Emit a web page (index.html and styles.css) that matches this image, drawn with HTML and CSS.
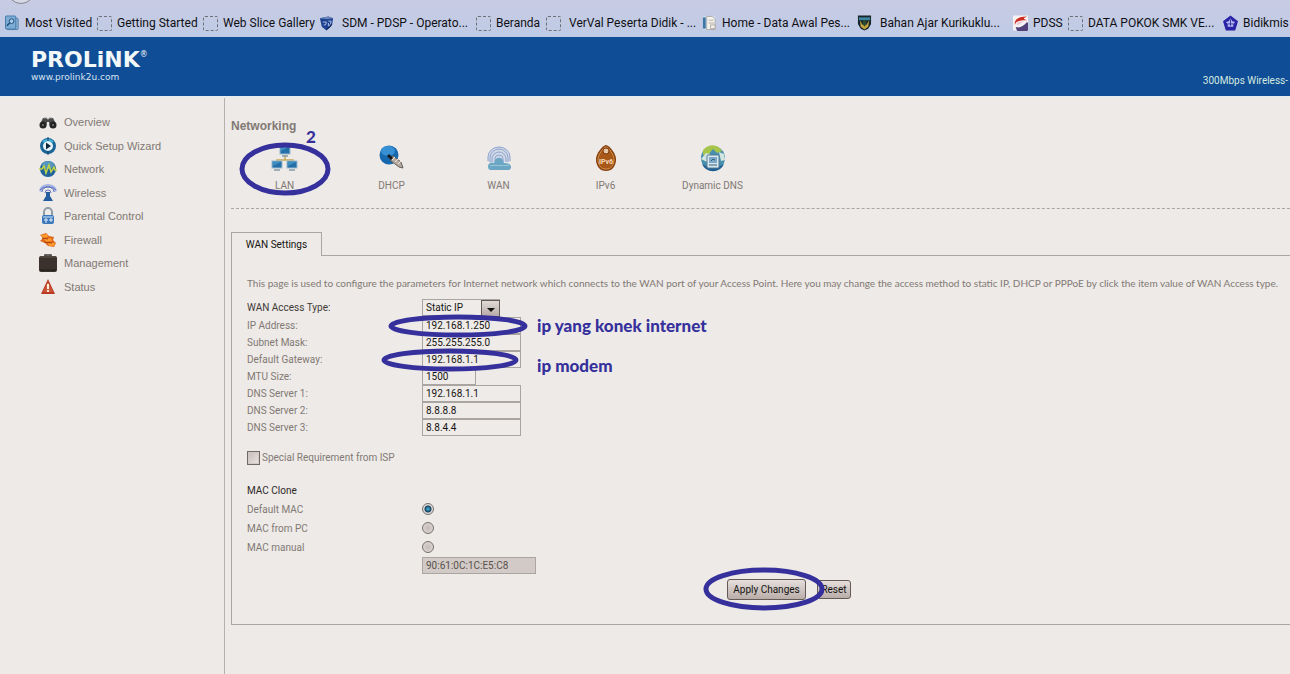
FILE: index.html
```html
<!DOCTYPE html>
<html lang="en">
<head>
  <meta charset="UTF-8">
  <meta name="viewport" content="width=device-width, initial-scale=1.0">
  <title>PROLiNK - WAN Settings</title>
  <link rel="stylesheet" href="styles.css">
</head>
<body>
  <!-- Bookmarks -->
  <nav class="bookmarks">
    <span class="back-edge"></span>
    <a href="#"><svg class="bm-icon" viewBox="0 0 16 16"><rect x="2" y="3" width="12" height="12" rx="1" fill="#8fb5d6" stroke="#4f7fae"/><rect x=".5" y=".5" width="11" height="14" rx="1" fill="#7cabd3" stroke="#4377a8"/><circle cx="7" cy="6" r="2.5" fill="#a9cbe6" stroke="#1d4a7c"/><path d="M5 8l-3 3" stroke="#1d4a7c" stroke-width="1.5"/></svg>Most Visited</a>
    <a href="#"><span class="bm-blank"></span>Getting Started</a>
    <a href="#"><span class="bm-blank"></span>Web Slice Gallery</a>
    <a href="#" class="wide"><svg class="bm-icon" viewBox="0 0 16 16"><path d="M1 3l9-2 5 2-1 7-6 6-5-4z" fill="#1c3f8f"/><path d="M1 3l8 1 6-1-5-2z" fill="#6c86b8"/><path d="M4 7h4l-1 3H5M10 6h3l-1 4-2 1V8" fill="none" stroke="#b4c6e8"/><path d="M8 15l4-3 1-3" stroke="#0a1848" fill="none"/></svg>SDM - PDSP - Operato...</a>
    <a href="#"><span class="bm-blank"></span>Beranda</a>
    <a href="#" class="wide"><span class="bm-blank"></span>VerVal Peserta Didik - ...</a>
    <a href="#"><svg class="bm-icon" viewBox="0 0 16 16"><path d="M1 1h13v14H1z" fill="#dce4ed"/><path d="M1 2h3v12H1z" fill="#3d78a8"/><path d="M5 1h6l3 3v11H5z" fill="#f5f3ee" stroke="#aaa"/><path d="M7 5h5M7 8h6M9 10h5v4H9z" fill="#eee" stroke="#b1a99f"/></svg>Home - Data Awal Pes...</a>
    <a href="#" class="wide"><svg class="bm-icon" viewBox="0 0 16 16"><path d="M1 0h14v9l-3 5-4 2-4-2-3-5z" fill="#17252d"/><path d="M2 2h12v3H2z" fill="#3d86a0"/><path d="M3 5l3 5 2-3 2 3 3-5-1 7-4 3-4-3z" fill="#c4a53e"/><path d="M6 5h4v4l-2 3-2-3z" fill="#2b4a35"/></svg>Bahan Ajar Kurikuklu...</a>
    <a href="#"><svg class="bm-icon" viewBox="0 0 16 16"><rect width="16" height="16" fill="#f6f1f3"/><path d="M15 7a7 7 0 1 1-12 5c3 2 8 0 12-5z" fill="#514079"/><path d="M15 1C6 1 1 4 2 10c1-4 5-5 13-5-4-1-5-2 0-4z" fill="#d02b22"/><path d="M4 10c2 1 5-3 8-4-5 0-8 1-8 4z" fill="#e5cad6"/></svg>PDSS</a>
    <a href="#"><span class="bm-blank"></span>DATA POKOK SMK VE...</a>
    <a href="#"><svg class="bm-icon" viewBox="0 0 16 16"><path d="M8 0l8 6-3 10H3L0 6z" fill="#2922a7"/><path d="M8 3l2 3 3 1-2 2v3H5V9L3 7l3-1z" fill="#b5b8ed"/><path d="M8 4v7M5 9h6" stroke="#3832ad"/></svg>Bidikmis</a>
  </nav>

  <!-- Header -->
  <header class="header">
    <div class="brand">
      <div class="logo">PROLiNK<span class="reg">®</span></div>
      <div class="site">www.prolink2u.com</div>
    </div>
    <div class="model">300Mbps Wireless-</div>
  </header>

  <div class="layout">
    <!-- Sidebar -->
    <aside class="sidenav">
      <ul>
        <li><a href="#"><svg class="side-icon" viewBox="0 0 18 18"><path d="M1 11L4 5h4l1 2 1-2h4l3 6v3h-6l-1-5H8l-1 5H1z" fill="#4a4a4a"/><circle cx="4" cy="12" r="3.5" fill="#252525"/><circle cx="14" cy="12" r="3.5" fill="#252525"/><circle cx="4" cy="12" r="1" fill="#777"/><circle cx="14" cy="12" r="1" fill="#777"/><path d="M5 5h3M10 5h3" stroke="#999"/></svg>Overview</a></li>
        <li><a href="#"><svg class="side-icon" viewBox="0 0 18 18"><circle cx="9" cy="9" r="6.5" fill="#e8f3f8" stroke="#1a6596" stroke-width="3"/><path d="M4 5a7 7 0 0 1 10 0" fill="none" stroke="#43b4d9" stroke-width="2"/><path d="M7 5.5l5 3.5-5 3.5z" fill="#10283d"/><path d="M9 0v4M9 14v4" stroke="#123c66"/></svg>Quick Setup Wizard</a></li>
        <li><a href="#"><svg class="side-icon" viewBox="0 0 18 18"><circle cx="9" cy="9" r="8" fill="#20649b"/><ellipse cx="9" cy="5" rx="6" ry="4" fill="#5595be"/><path d="M0 9h3l2-3 2 7 3-8 2 7 3-5 1 3h2" fill="none" stroke="#c1d546" stroke-width="1.5"/></svg>Network</a></li>
        <li><a href="#"><svg class="side-icon" viewBox="0 0 18 18"><path d="M0 7a9 7 0 0 1 18 0l-3 1a6 5 0 0 0-12 0z" fill="#a9b8e7"/><path d="M1 6a9 6 0 0 1 16 0M3 8a6 5 0 0 1 12 0M6 9a3 3 0 0 1 6 0" fill="none" stroke="#6072bd"/><path d="M7 8h4v4l3 5H4l3-5z" fill="#245d9f"/></svg>Wireless</a></li>
        <li><a href="#"><svg class="side-icon" viewBox="0 0 18 18"><path d="M5 9V5a4 4 0 0 1 8 0v4" fill="none" stroke="#8f9da8" stroke-width="2"/><rect x="3" y="8" width="12" height="9" rx="2" fill="#3c78b9"/><path d="M4 9h10v2H4z" fill="#86b0dc"/><path d="M5 13h4M7 11v5M10 13h4M12 11v4" stroke="#dfedff"/></svg>Parental Control</a></li>
        <li><a href="#"><svg class="side-icon" viewBox="0 0 18 18"><path d="M1 4l6-2 3 3 5 1-1 3 3 3-2 4-6-1-3-3-5-2 3-3z" fill="#df681a"/><path d="M2 4l6-1 1 3-5 1zM5 8l7-1 1 3-6 1zM9 12l7 0-1 3-5 0z" fill="#ff9b2d"/><path d="M3 7l6 1M5 11l8 1" stroke="#a63c12"/></svg>Firewall</a></li>
        <li><a href="#"><svg class="side-icon" viewBox="0 0 18 18"><path d="M6 4V1h6v3" fill="none" stroke="#3b332f" stroke-width="1.5"/><rect y="2" width="18" height="16" rx="2" fill="#3b322d"/><path d="M2 3h14" stroke="#66584f"/><path d="M1 16h16" stroke="#211c19"/></svg>Management</a></li>
        <li><a href="#"><svg class="side-icon" viewBox="0 0 18 18"><path d="M9 1l7 15H2z" fill="#b83b21"/><path d="M9 3L4 14h10z" fill="#cc563a"/><path d="M9 6v5M9 12v2" stroke="#fff0df" stroke-width="2"/></svg>Status</a></li>
      </ul>
    </aside>

    <!-- Main Content -->
    <main class="content">
      <h1>Networking</h1>
      <div class="net-menu">
        <a href="#"><svg class="net-icon" viewBox="0 0 28 28"><path d="M14 11v5M6 20v-4h16v4" fill="none" stroke="#c5a855" stroke-width="1.5"/><rect x="9" y="2" width="10" height="8" fill="#256fa8" stroke="#9abbd2"/><rect x="1" y="17" width="10" height="7" fill="#256fa8" stroke="#9abbd2"/><rect x="16" y="17" width="10" height="7" fill="#256fa8" stroke="#9abbd2"/><path d="M10 3h8l-8 4zM2 18h8l-8 4zM17 18h8l-8 4z" fill="#3d8fc2"/><path d="M11 12h6M3 26h6M18 26h6" stroke="#8b9ca8" stroke-width="1.5"/></svg>LAN
          <svg class="mark mark-lan" viewBox="0 0 92 54"><ellipse cx="46" cy="27" rx="43" ry="24"/></svg>
          <span class="note note-step">2</span>
        </a>
        <a href="#"><svg class="net-icon" viewBox="0 0 28 28"><circle cx="11" cy="11" r="9.5" fill="#1768ae"/><ellipse cx="10" cy="7" rx="7" ry="5" fill="#3790d4"/><path d="M12 13l3-1 8 6 2 6-4-1-8-6z" fill="#b6aaa0" stroke="#665f59"/><path d="M14 16l3-3M17 18l3-3M20 20l3-3" stroke="#f0e9df"/><path d="M10 11l4 4" stroke="#151a20" stroke-width="3"/></svg>DHCP</a>
        <a href="#"><svg class="net-icon" viewBox="0 0 28 28"><path d="M3 18V13a11 10 0 0 1 22 0v5" fill="#d1d9e9"/><g fill="none" stroke="#8fa4cd"><path d="M3 17V13a11 10 0 0 1 22 0v4M5 18v-4a9 9 0 0 1 18 0v4M7 18v-3a7 7 0 0 1 14 0v3M10 17v-2a4 4 0 0 1 8 0v2"/></g><path d="M5 26a4 4 0 0 1 0-7c2-1 3 0 4 0 1-7 9-7 10 0 8-1 9 7 4 7z" fill="#6ba6c5"/><path d="M5 22c5-2 12 1 19-1" fill="none" stroke="#9bcbd7"/></svg>WAN</a>
        <a href="#"><svg class="net-icon" viewBox="0 0 28 28"><path d="M14 1c3 0 11 9 10 16-1 6-4 10-10 10S5 23 4 17C3 10 11 1 14 1z" fill="#8a420f"/><path d="M14 3c2 0 9 8 8 14-1 5-3 8-8 8s-7-3-8-8c-1-6 6-14 8-14z" fill="#a85816" stroke="#d49450"/><circle cx="14" cy="7" r="3" fill="#e7c6a4" stroke="#79370d"/><text x="14" y="20" text-anchor="middle" class="badge-text">IPv6</text></svg>IPv6</a>
        <a href="#"><svg class="net-icon" viewBox="0 0 28 28"><circle cx="14" cy="14" r="12" fill="#478fae"/><path d="M4 6c6-7 15-6 19 1l-5 2-4-4-4 5-6 1z" fill="#a6c54a"/><path d="M2 15l5-6 4 1-3 8zM20 8l5 2 1 6-4 1z" fill="#d2e6df"/><path d="M3 20a12 12 0 0 0 22 0l-4 2H7z" fill="#215e91"/><rect x="8" y="11" width="12" height="13" rx="1" fill="#d9e7ee" stroke="#547c96"/><path d="M10 13h8v6h-8z" fill="#7ba8c6"/><path d="M12 17l2-2 2 1M10 21h8" stroke="#345d79" fill="none"/></svg>Dynamic DNS</a>
      </div>

      <div class="tabs">
        <button type="button" class="tab">WAN Settings</button>
      </div>

      <form class="panel">
        <p class="intro">This page is used to configure the parameters for Internet network which connects to the WAN port of your Access Point. Here you may change the access method to static IP, DHCP or PPPoE by click the item value of WAN Access type.</p>

        <div class="row row-type">
          <label for="wanType" class="dark">WAN Access Type:</label>
          <span class="select-box">
            <select id="wanType">
              <option>Static IP</option>
              <option>DHCP Client</option>
              <option>PPPoE</option>
            </select>
          </span>
        </div>
        <div class="row">
          <label for="ip">IP Address:</label>
          <input type="text" id="ip" value="192.168.1.250">
          <svg class="mark mark-ip" viewBox="0 0 140 24"><ellipse cx="70" cy="12" rx="67" ry="9"/></svg>
          <span class="note">ip yang konek internet</span>
        </div>
        <div class="row">
          <label for="mask">Subnet Mask:</label>
          <input type="text" id="mask" value="255.255.255.0">
        </div>
        <div class="row">
          <label for="gateway">Default Gateway:</label>
          <input type="text" id="gateway" value="192.168.1.1">
          <svg class="mark mark-gateway" viewBox="0 0 140 24"><ellipse cx="70" cy="12" rx="66" ry="9"/></svg>
          <span class="note note-modem">ip modem</span>
        </div>
        <div class="row">
          <label for="mtu">MTU Size:</label>
          <input type="text" id="mtu" class="short" value="1500">
        </div>
        <div class="row">
          <label for="dns1">DNS Server 1:</label>
          <input type="text" id="dns1" value="192.168.1.1">
        </div>
        <div class="row">
          <label for="dns2">DNS Server 2:</label>
          <input type="text" id="dns2" value="8.8.8.8">
        </div>
        <div class="row">
          <label for="dns3">DNS Server 3:</label>
          <input type="text" id="dns3" value="8.8.4.4">
        </div>

        <div class="check-row">
          <input type="checkbox" id="special">
          <label for="special">Special Requirement from ISP</label>
        </div>

        <h2>MAC Clone</h2>
        <div class="row row-mac">
          <label for="macDefault">Default MAC</label>
          <input type="radio" name="mac" id="macDefault" checked>
        </div>
        <div class="row row-mac">
          <label for="macPc">MAC from PC</label>
          <input type="radio" name="mac" id="macPc">
        </div>
        <div class="row row-mac">
          <label for="macManual">MAC manual</label>
          <input type="radio" name="mac" id="macManual">
        </div>
        <div class="row">
          <span></span>
          <input type="text" class="mac-value" aria-label="MAC address" value="90:61:0C:1C:E5:C8" disabled>
        </div>

        <div class="actions">
          <button type="button" class="btn">Apply Changes</button>
          <button type="reset" class="btn btn-reset">Reset</button>
          <svg class="mark mark-apply" viewBox="0 0 122 44"><ellipse cx="61" cy="22" rx="58" ry="19"/></svg>
        </div>
      </form>
    </main>
  </div>
</body>
</html>
```
FILE: styles.css
```css
/* Global Styles */
* {
  box-sizing: border-box;
}

body {
  margin: 0;
  min-height: 100vh;
  display: flex;
  flex-direction: column;
  overflow: hidden;
  background-color: #edeae7;
  color: #827974;
  font-family: Roboto, Arial, sans-serif;
  font-size: 10px;
  line-height: 14px;
}

a {
  color: inherit;
  text-decoration: none;
}

/* Bookmarks */
.bookmarks {
  position: relative;
  display: grid;
  grid-template-columns: 92px 106px 116px 157px 70px 156px 155px 156px 55px 155px 67px;
  height: 37px;
  padding: 9px 0 0 5px;
  overflow: hidden;
  background: linear-gradient(#c8cbe4, #bfcbe5);
  color: #101014;
  font-size: 12px;
}

.bookmarks a {
  display: flex;
  align-items: center;
  gap: 5px;
  white-space: nowrap;
}

.bookmarks a.wide {
  gap: 8px;
}

.bm-icon {
  flex: none;
  width: 15px;
  height: 16px;
}

.bm-blank {
  flex: none;
  width: 15px;
  height: 15px;
  border: 1px dashed #6e7078;
  border-radius: 2px;
}

.back-edge {
  position: absolute;
  top: -24px;
  left: 7px;
  width: 28px;
  height: 28px;
  border: 1px solid #85868e;
  border-radius: 50%;
  background-color: #d7d8e6;
}

/* Header */
.header {
  display: flex;
  justify-content: space-between;
  height: 61px;
  padding: 12px 0 0 31px;
  background-color: #0f4d97;
  border-bottom: 2px solid #e5edec;
  color: #f2f7f7;
}

.logo {
  display: flex;
  font-family: "DejaVu Sans", sans-serif;
  font-size: 22px;
  font-weight: bold;
  line-height: 22px;
}

.reg {
  font-size: 8px;
  font-weight: normal;
  line-height: 12px;
}

.site {
  font-family: "DejaVu Sans", sans-serif;
  font-size: 9px;
  line-height: 12px;
  color: #d5e3ef;
}

.model {
  padding: 25px 2px 0 0;
  white-space: nowrap;
  color: #d5eadf;
}

/* Sidebar */
.layout {
  flex: 1;
  display: flex;
}

.sidenav {
  flex: none;
  width: 225px;
  border-right: 1px solid #b5b1ae;
}

.sidenav ul {
  display: grid;
  grid-auto-rows: 1fr;
  height: 188px;
  margin: 15px 0 0 39px;
  padding: 0;
  list-style: none;
  font-family: "Liberation Sans", Arial, sans-serif;
  font-size: 11px;
}

.sidenav a {
  display: flex;
  align-items: center;
  gap: 7px;
}

.side-icon {
  width: 18px;
  height: 18px;
}

/* Main Content */
.content {
  flex: 1;
  min-width: 0;
  padding: 21px 0 24px 6px;
}

h1 {
  margin: 0;
  font-family: "Liberation Sans", Arial, sans-serif;
  font-size: 12px;
  line-height: 14px;
}

.net-menu {
  display: grid;
  grid-template-columns: repeat(5, 107px);
  padding: 11px 0 15px;
  border-bottom: 1px dashed #aaa5a1;
}

.net-menu a {
  position: relative;
  display: flex;
  flex-direction: column;
  align-items: center;
  gap: 7px;
}

.net-icon {
  width: 28px;
  height: 28px;
}

.badge-text {
  font-size: 7px;
  font-weight: bold;
  fill: #f7d9bd;
}

/* Tabs */
.tabs {
  display: flex;
  margin-top: 23px;
}

.tabs::after {
  content: "";
  flex: 1;
  border-bottom: 1px solid #aaa6a3;
}

.tab {
  width: 91px;
  height: 24px;
  padding: 0;
  border: 1px solid #aaa6a3;
  border-bottom: none;
  background: none;
  color: #161412;
  font-family: inherit;
  font-size: 10px;
}

.panel {
  padding: 20px 0 24px 15px;
  border-left: 1px solid #aaa6a3;
  border-bottom: 1px solid #aaa6a3;
}

.intro {
  margin: 0 0 9px;
  font-family: Lato, sans-serif;
  white-space: nowrap;
}

/* Form rows */
.row {
  position: relative;
  display: grid;
  grid-template-columns: 175px auto 1fr;
  align-items: center;
  height: 17px;
}

.row-type {
  margin-bottom: 1px;
}

.row-mac {
  height: 19px;
}

.dark {
  color: #3f3a37;
}

input[type="text"],
select {
  width: 99px;
  height: 17px;
  margin: 0;
  padding: 0 3px;
  border: 1px solid #aaa5a1;
  border-radius: 0;
  background-color: #eeebe8;
  color: #171513;
  font-family: inherit;
  font-size: 10px;
}

input.short {
  width: 54px;
}

input.mac-value {
  width: 114px;
  background-color: #d2cac6;
  color: #59524e;
}

.select-box {
  position: relative;
  width: 78px;
  height: 17px;
}

.select-box select {
  width: 78px;
  appearance: none;
}

.select-box::before {
  content: "";
  position: absolute;
  top: 1px;
  right: 0;
  width: 17px;
  height: 15px;
  border: 1px solid #625955;
  background: linear-gradient(#e0dad7, #b7aaa6);
  pointer-events: none;
}

.select-box::after {
  content: "";
  position: absolute;
  top: 9px;
  right: 5px;
  border: 4px solid transparent;
  border-top-color: #111;
  border-bottom: none;
  pointer-events: none;
}

.check-row {
  display: flex;
  align-items: center;
  gap: 2px;
  height: 17px;
  margin: 13px 0 16px;
}

input[type="checkbox"] {
  appearance: none;
  width: 13px;
  height: 14px;
  margin: 0;
  border: 1px solid #716966;
  background: linear-gradient(135deg, #c4bbb7, #ebe6e3);
  box-shadow: inset 0 0 0 1px #d1c9c5;
}

input[type="radio"] {
  appearance: none;
  width: 12px;
  height: 12px;
  margin: 0 0 2px;
  border: 1px solid #77706d;
  border-radius: 50%;
  background: radial-gradient(#c4bbb7, #e2dcd9);
}

input[type="radio"]:checked {
  background: radial-gradient(#3b9ac0 0 1px, #143c5c 3px, #dedad8 4px);
}

h2 {
  margin: 0 0 1px;
  color: #2d2926;
  font-size: 10px;
  font-weight: normal;
  line-height: 17px;
}

/* Buttons */
.actions {
  position: relative;
  display: flex;
  align-items: center;
  gap: 11px;
  width: 604px;
  margin-top: 5px;
  padding-left: 480px;
}

.btn {
  flex: none;
  width: 79px;
  height: 21px;
  padding: 0;
  border: 1px solid #645954;
  border-radius: 3px;
  background: linear-gradient(#e5dfdc, #b9ada9);
  color: #141210;
  font-family: inherit;
  font-size: 10px;
}

.btn-reset {
  width: 34px;
  height: 19px;
}

/* Pen marks and notes */
.mark {
  position: absolute;
  fill: none;
  stroke: #35309c;
  stroke-width: 5px;
  pointer-events: none;
}

.mark-lan {
  top: -2px;
  left: 8px;
  width: 92px;
  height: 54px;
}

.mark-ip,
.mark-gateway {
  z-index: 1;
  left: 141px;
  top: -3px;
  width: 140px;
  height: 24px;
}

.mark-gateway {
  left: 133px;
}

.mark-apply {
  top: -12px;
  left: 456px;
  width: 122px;
  height: 44px;
}

.note {
  padding-left: 16px;
  color: #35309c;
  font-family: Lato, sans-serif;
  font-size: 17px;
  font-weight: 900;
  line-height: 17px;
  white-space: nowrap;
}

.note-modem {
  position: absolute;
  top: 6px;
  left: 274px;
}

.note-step {
  position: absolute;
  top: -16px;
  left: 59px;
}
```
